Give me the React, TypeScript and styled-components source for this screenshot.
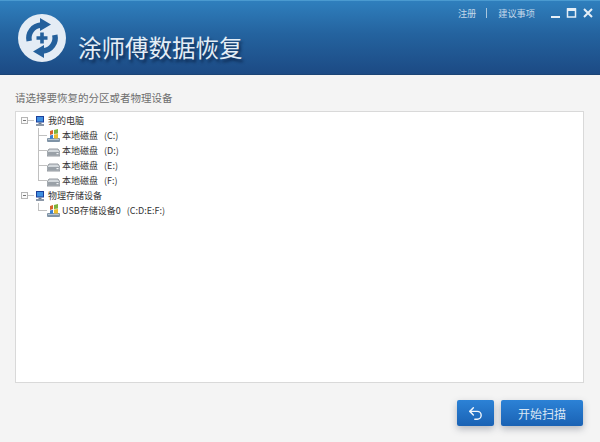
import React from "react"
import styled, { createGlobalStyle } from "styled-components"
import { Undo2 } from "lucide-react"

const GlobalStyle = createGlobalStyle`
  html, body {
    margin: 0;
    padding: 0;
    background: #f4f4f4;
  }
  body {
    font-family: "Noto Sans CJK SC", "Liberation Sans", sans-serif;
  }
`
const Page = styled.div`
  width: 600px;
  height: 442px;
  display: flex;
  flex-direction: column;
  overflow: hidden;
`
const Header = styled.div`
  height: 75px;
  box-sizing: border-box;
  border-top: 1px solid #4a9ad0;
  border-bottom: 1px solid #1b4475;
  background: linear-gradient(#2f7fbd, #24639f 45%, #1c4a84);
  display: flex;
  justify-content: space-between;
  padding: 0 7px 0 17px;
`
const Brand = styled.div`
  display: flex;
  align-items: center;
  gap: 11px;
`
const Title = styled.div`
  font-size: 23.5px;
  line-height: 30px;
  margin-top: 18px;
  color: #e3edf6;
  text-shadow: 2px 3px 3px rgba(6, 24, 56, 0.75);
`
const TopBar = styled.div`
  display: flex;
  align-items: center;
  height: 24px;
  color: #c3d8ea;
  font-size: 9.2px;
`
const TopLink = styled.span`
  line-height: 24px;
`
const TopSep = styled.span`
  width: 1px;
  height: 10px;
  margin: 0 11px 0 10px;
  background: #a9c6de;
`
const WinIcons = styled.svg`
  margin-left: 16px;
  display: block;
`
const Body = styled.div`
  flex: 1;
  display: flex;
  flex-direction: column;
  padding: 16px 16px 15px 15px;
`
const Prompt = styled.div`
  font-size: 10.5px;
  line-height: 14px;
  color: #6e6e6e;
  margin-bottom: 6px;
`
const TreeBox = styled.div`
  height: 272px;
  box-sizing: border-box;
  background: #fff;
  border: 1px solid #d9d9d9;
  padding: 1px 0 0 5px;
`
const NodeRow = styled.div`
  display: flex;
  align-items: center;
  height: 15px;
  font-size: 9px;
  color: #333;
  white-space: pre;
`
const Expander = styled.span`
  width: 7px;
  height: 7px;
  box-sizing: border-box;
  border: 1px solid #b5b5b5;
  display: flex;
  align-items: center;
  justify-content: center;
  background: #fafafa;
  &::before {
    content: "";
    width: 3px;
    height: 1px;
    background: #777;
  }
`
const Dots = styled.span`
  width: 6px;
  height: 1px;
  margin-right: 1px;
  background: #c4c4c4;
`
const RootLabel = styled.span`
  margin-left: 3px;
`
const Children = styled.div`
  margin-left: 17px;
`
const Elbow = styled.span<{ $last?: boolean }>`
  width: 9px;
  height: 15px;
  background:
    linear-gradient(#c0c0c0, #c0c0c0) 0 0 / 1px ${p => (p.$last ? "8px" : "100%")} no-repeat,
    linear-gradient(#c0c0c0, #c0c0c0) 0 7px / 100% 1px no-repeat;
`
const ChildLabel = styled.span`
  margin-left: 2px;
`
const Drive = styled.span`
  margin-left: 6px;
`
const Actions = styled.div`
  display: flex;
  justify-content: flex-end;
  gap: 7px;
  margin-top: 17px;
  padding-right: 1px;
`
const ActionButton = styled.button<{ $wide?: boolean }>`
  width: ${p => (p.$wide ? "82px" : "37px")};
  height: 26px;
  padding: 0;
  border: 0;
  border-radius: 2px;
  background: linear-gradient(#2c82d6, #1a62b4);
  box-shadow: 0 3px 7px rgba(60, 70, 90, 0.35);
  color: #d9e7f5;
  font-family: inherit;
  font-size: 12px;
  display: flex;
  align-items: center;
  justify-content: center;
`

const Logo = () => (
  <svg width="50" height="50" viewBox="0 0 50 50">
    <circle cx="25" cy="25" r="24" fill="#e4ecf5" />
    <g fill="none" stroke="#24609c" strokeWidth="5.5">
      <path d="M12.2 28 A13.2 13.2 0 0 1 24 11.9" />
      <path d="M37.8 22 A13.2 13.2 0 0 1 26 38.1" />
    </g>
    <path d="M23 5 L34 11.5 L23 18 Z" fill="#24609c" />
    <path d="M27 45 L16 38.5 L27 32 Z" fill="#24609c" />
    <path d="M23.2 19.5 h3.6 v3.7 h3.7 v3.6 h-3.7 v3.7 h-3.6 v-3.7 h-3.7 v-3.6 h3.7 Z" fill="#24609c" />
  </svg>
)

const Monitor = () => (
  <svg width="10" height="10" viewBox="0 0 10 10">
    <rect x="1" y="0" width="8" height="6.5" fill="#1c3f9a" />
    <rect x="2" y="1" width="6" height="4.5" fill="#3f8fe0" />
    <rect x="3.5" y="6.5" width="3" height="1.5" fill="#6a7a90" />
    <rect x="1" y="8" width="8" height="2" fill="#8c98a8" />
  </svg>
)

const WinDrive = () => (
  <svg width="13" height="13" viewBox="0 0 13 13" style={{ display: "block" }}>
    <rect x="0" y="9" width="13" height="4" rx="1" fill="#7f93a6" />
    <rect x="1" y="10" width="11" height="1" fill="#b7c4d0" />
    <path d="M3 2 L6 1 V5 L3 6 Z" fill="#d8632c" />
    <path d="M7 1 L11 0 V4.5 L7 5 Z" fill="#7fb23c" />
    <path d="M3 6.5 L6 5.8 V9.5 L3 10 Z" fill="#3c7fd0" />
    <path d="M7 5.6 L11 5 V9.5 L7 9.5 Z" fill="#ecbd2e" />
  </svg>
)

const Hdd = () => (
  <svg width="13" height="13" viewBox="0 0 13 13" style={{ display: "block" }}>
    <path d="M2 5 H11 L13 8 V12 H0 V8 Z" fill="#d3d8dc" stroke="#7c8288" strokeWidth="0.8" />
    <rect x="0.5" y="8" width="12" height="3.6" fill="#9aa1a8" />
    <rect x="9.5" y="9" width="2" height="1.2" fill="#f2f4f5" />
  </svg>
)

const drives = ["C", "D", "E", "F"]

const App = () => {
  return (
    <Page>
      <GlobalStyle />
      <Header>
        <Brand>
          <Logo />
          <Title>涂师傅数据恢复</Title>
        </Brand>
        <TopBar>
          <TopLink>注册</TopLink>
          <TopSep />
          <TopLink>建议事项</TopLink>
          <WinIcons width="42" height="12" viewBox="0 0 42 12">
            <rect x="0" y="9" width="9" height="2" fill="#e6eff7" />
            <rect x="16.5" y="2" width="8" height="8" fill="none" stroke="#e6eff7" strokeWidth="1.5" />
            <rect x="16" y="1" width="9" height="3" fill="#e6eff7" />
            <path d="M33 2 L41 10 M41 2 L33 10" stroke="#e6eff7" strokeWidth="2" />
          </WinIcons>
        </TopBar>
      </Header>
      <Body>
        <Prompt>请选择要恢复的分区或者物理设备</Prompt>
        <TreeBox>
          <NodeRow>
            <Expander />
            <Dots />
            <Monitor />
            <RootLabel>我的电脑</RootLabel>
          </NodeRow>
          <Children>
            {drives.map((d, i) => (
              <NodeRow key={d}>
                <Elbow $last={i === drives.length - 1} />
                {i === 0 ? <WinDrive /> : <Hdd />}
                <ChildLabel>本地磁盘</ChildLabel>
                <Drive>({d}:)</Drive>
              </NodeRow>
            ))}
          </Children>
          <NodeRow>
            <Expander />
            <Dots />
            <Monitor />
            <RootLabel>物理存储设备</RootLabel>
          </NodeRow>
          <Children>
            <NodeRow>
              <Elbow $last />
              <WinDrive />
              <ChildLabel>USB存储设备0</ChildLabel>
              <Drive>(C:D:E:F:)</Drive>
            </NodeRow>
          </Children>
        </TreeBox>
        <Actions>
          <ActionButton>
            <Undo2 size={17} strokeWidth={2} color="#f2f7fc" />
          </ActionButton>
          <ActionButton $wide>开始扫描</ActionButton>
        </Actions>
      </Body>
    </Page>
  )
}

export default App
